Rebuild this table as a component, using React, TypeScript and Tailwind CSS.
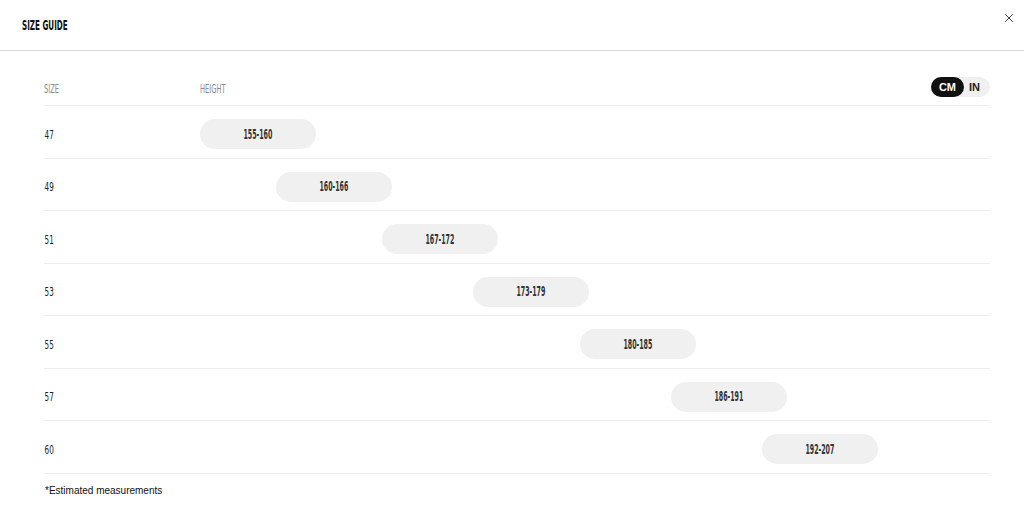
import { X } from 'lucide-react';

const rows = [
  { size: '47', range: '155-160', offset: 0 },
  { size: '49', range: '160-166', offset: 76 },
  { size: '51', range: '167-172', offset: 182 },
  { size: '53', range: '173-179', offset: 273 },
  { size: '55', range: '180-185', offset: 380 },
  { size: '57', range: '186-191', offset: 471 },
  { size: '60', range: '192-207', offset: 562 },
];

const cond = "font-['Liberation_Sans_Narrow','DejaVu_Sans_Condensed',sans-serif] [font-stretch:condensed]";

export default function App() {
  return (
    <div className="w-[1024px] h-[513px] bg-white text-[#111] overflow-hidden font-['Liberation_Sans',Arial,sans-serif]">
      <header className="h-[51px] flex items-center justify-between pl-[22px] pr-[5px] border-b border-[#d6d6d6]">
        <h1 className={`${cond} text-[14px] font-bold text-[#111] scale-x-[0.57] origin-left`}>
          SIZE GUIDE
        </h1>
        <button className="w-5 h-5 flex items-center justify-center -mt-[15px] text-[#222]">
          <X size={14} strokeWidth={1.5} />
        </button>
      </header>

      <div className="pl-[44px] pt-[18px]" style={{ width: 990 }}>
        <div className="flex items-center h-[37px] pt-[4px] border-b border-[#eeeeee]">
          <div className={`${cond} w-[156px] text-[12px] text-[#8a8a8a] scale-x-[0.62] origin-left`}>SIZE</div>
          <div className={`${cond} flex-1 text-[12px] text-[#8a8a8a] scale-x-[0.62] origin-left`}>HEIGHT</div>
          <div className="flex items-center h-[20px] -mt-[4px] rounded-full bg-[#f0f0f0] text-[11px] font-bold">
            <span className="h-full px-[8px] flex items-center rounded-full bg-[#111] text-white">CM</span>
            <span className="h-full pl-[5px] pr-[10px] flex items-center text-[#222] font-semibold">IN</span>
          </div>
        </div>

        {rows.map((r) => (
          <div key={r.size} className="flex items-center h-[52.5px] pt-[5px] border-b border-[#eeeeee]">
            <div className={`${cond} w-[156px] pl-px text-[13px] text-[#222] scale-x-[0.62] origin-left`}>{r.size}</div>
            <div className="flex-1">
              <div
                className="w-[116px] h-[30px] rounded-full bg-[#f0f0f0] flex items-center justify-center"
                style={{ marginLeft: r.offset }}
              >
                <span className={`${cond} text-[14px] font-bold text-[#333] scale-x-[0.5]`}>{r.range}</span>
              </div>
            </div>
          </div>
        ))}

        <p className="pt-[9px] pl-px text-[10px] text-[#111]">*Estimated measurements</p>
      </div>
    </div>
  );
}
